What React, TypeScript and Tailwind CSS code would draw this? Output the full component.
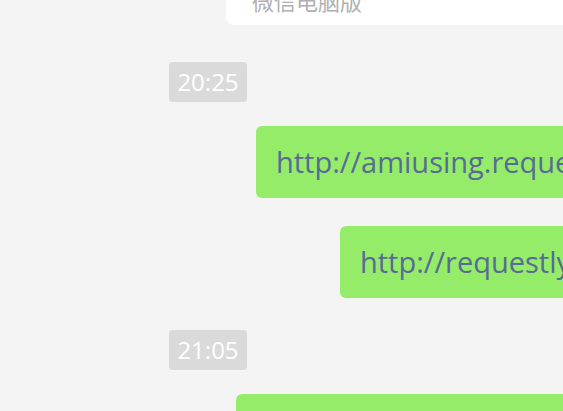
import React from "react";

const font = { fontFamily: '"Open Sans", "Noto Sans CJK SC", sans-serif' };

function Time({ t }: { t: string }) {
  return (
    <div className="ml-[169px] flex h-[40px] w-[78px] items-center justify-center rounded-[4px] bg-[#dadada] text-[24px] leading-none text-white">
      {t}
    </div>
  );
}

function Bubble({ text, ml }: { text: string; ml: string }) {
  return (
    <div className={`${ml} flex h-[72px] items-center whitespace-nowrap rounded-[6px] bg-[#95ec69] pl-5 pr-5 text-[29px] text-[#576b95]`}>
      {text}
    </div>
  );
}

export default function App() {
  return (
    <div
      className="flex h-[411px] w-[563px] flex-col overflow-hidden bg-[#f4f4f4]"
      style={font}
    >
      <div className="ml-[226px] -mt-[20px] flex h-[45px] w-[500px] shrink-0 items-end rounded-b-[8px] bg-white pb-[14px] pl-[26px] text-[22px] leading-none text-[#b0b0b0]" style={{ fontFamily: '"Noto Sans CJK SC", sans-serif' }}>
        微信电脑版
      </div>
      <div className="mt-[37px] shrink-0">
        <Time t="20:25" />
      </div>
      <div className="mt-[24px] w-[1000px] shrink-0">
        <Bubble ml="ml-[256px]" text="http://amiusing.requestly.io" />
      </div>
      <div className="mt-[28px] w-[1000px] shrink-0">
        <Bubble ml="ml-[340px]" text="http://requestly.io" />
      </div>
      <div className="mt-[32px] shrink-0">
        <Time t="21:05" />
      </div>
      <div className="mt-[24px] w-[1000px] shrink-0">
        <Bubble ml="ml-[236px]" text="http://requestly.io/downloads" />
      </div>
    </div>
  );
}
